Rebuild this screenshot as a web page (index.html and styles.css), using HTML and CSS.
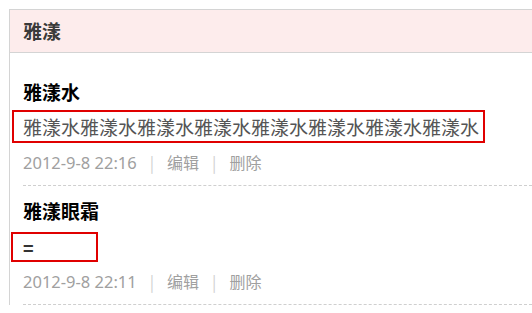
FILE: index.html
```html
<!DOCTYPE html>
<html lang="zh-CN">
<head>
<meta charset="utf-8">
<title>雅漾</title>
<link rel="stylesheet" href="styles.css">
</head>
<body>
<div class="panel">
  <div class="panel-head">雅漾</div>
  <ul class="posts">
    <li class="post">
      <h3 class="post-title">雅漾水</h3>
      <p class="post-body">雅漾水雅漾水雅漾水雅漾水雅漾水雅漾水雅漾水雅漾水</p>
      <div class="post-meta"><span class="post-date">2012-9-8 22:16</span><span class="sep">|</span><a class="action">编辑</a><span class="sep">|</span><a class="action">删除</a></div>
    </li>
    <li class="post">
      <h3 class="post-title">雅漾眼霜</h3>
      <p class="post-body post-body--short">=</p>
      <div class="post-meta"><span class="post-date">2012-9-8 22:11</span><span class="sep">|</span><a class="action">编辑</a><span class="sep">|</span><a class="action">删除</a></div>
    </li>
  </ul>
</div>
</body>
</html>
```
FILE: styles.css
```css
html, body {
  margin: 0;
  padding: 0;
  background: #fff;
}
body {
  font-family: "Noto Sans CJK SC", "Noto Sans", sans-serif;
}
.panel {
  margin: 9px 0 0 9px;
  border: 1px solid #d4d4d4;
  border-right: none;
  border-bottom: none;
}
.panel-head {
  height: 42px;
  line-height: 42px;
  padding-left: 13px;
  background: #fdecec;
  border-bottom: 1px solid #d4d4d4;
  color: #3a3a3a;
  font-size: 19px;
  font-weight: bold;
}
.posts {
  list-style: none;
  margin: 0;
  padding: 14px 0 0 13px;
}
.post {
  padding: 10px 0 7px;
  border-bottom: 1px dashed #cfcfcf;
}
.post-title {
  margin: 0;
  font-size: 19px;
  line-height: 30px;
  font-weight: bold;
  color: #000;
}
.post-body {
  display: inline-block;
  margin: 3px 0 0 -11px;
  padding: 0 4px 0 9px;
  border: 2px solid #e00000;
  font-size: 19px;
  line-height: 29px;
  color: #555;
}
.post-body--short {
  display: block;
  width: 69px;
  margin-top: 6px;
  margin-left: -12px;
  padding-left: 10px;
  font-size: 18px;
  font-weight: bold;
  line-height: 26px;
  color: #333;
}
.post-meta {
  margin-top: 4px;
  line-height: 30px;
  font-size: 16px;
  color: #a0a0a0;
}
.post-date {
  font-family: "Noto Sans", "Noto Sans CJK SC", sans-serif;
  font-size: 16.5px;
}
.sep {
  padding: 0 13px;
  color: #d0d0d0;
}
.action {
  color: #a0a0a0;
}
```
